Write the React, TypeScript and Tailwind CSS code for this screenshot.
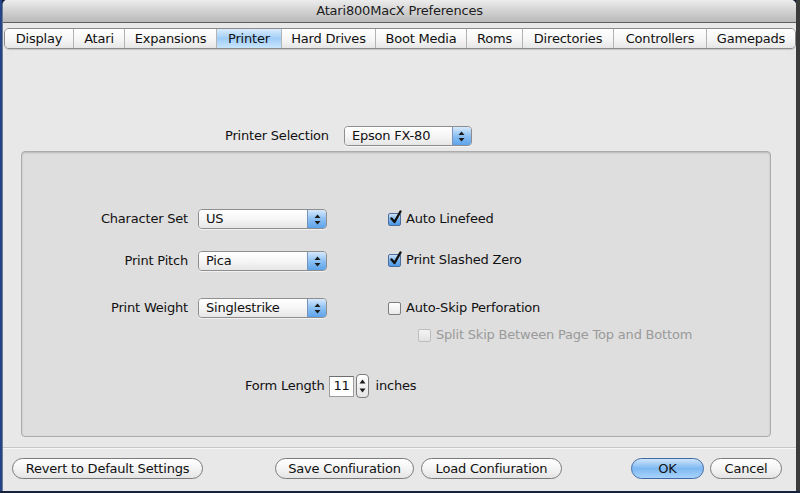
import React from "react";

const tabs = [
  { name: "Display", w: "w-[69px]" },
  { name: "Atari", w: "w-[51px]" },
  { name: "Expansions", w: "w-[92px]" },
  { name: "Printer", w: "w-[65px]", active: true },
  { name: "Hard Drives", w: "w-[94px]" },
  { name: "Boot Media", w: "w-[91px]" },
  { name: "Roms", w: "w-[56px]" },
  { name: "Directories", w: "w-[91px]" },
  { name: "Controllers", w: "w-[93px]" },
  { name: "Gamepads", w: "flex-1" },
];

function Arrows({ className = "" }: { className?: string }) {
  return (
    <svg width="7" height="11" viewBox="0 0 7 11" className={className}>
      <path d="M3.5 0.5 L6.5 4 L0.5 4 Z" fill="#1a1a1a" />
      <path d="M3.5 10.5 L6.5 7 L0.5 7 Z" fill="#1a1a1a" />
    </svg>
  );
}

function Popup({ value, w }: { value: string; w: string }) {
  return (
    <div className={`${w} h-[20px] flex rounded-[4px] border border-[#8e8e8e] overflow-hidden shadow-[0_1px_0_rgba(255,255,255,0.6)]`}>
      <div className="flex-1 flex items-center pl-[7px] bg-gradient-to-b from-white via-[#f6f6f6] to-[#e6e6e6] text-[#111]">
        {value}
      </div>
      <div className="w-[19px] flex items-center justify-center border-l border-[#7a93b8] bg-gradient-to-b from-[#d7e9fb] via-[#8cc0f3] to-[#5da3ea]">
        <Arrows />
      </div>
    </div>
  );
}

function Check({ checked, disabled }: { checked?: boolean; disabled?: boolean }) {
  if (checked) {
    return (
      <div className="w-[13px] h-[13px] rounded-[2px] border border-[#4d6e9c] bg-gradient-to-b from-[#cfe4fa] via-[#78b2ee] to-[#4d98e6] relative">
        <svg width="14" height="15" viewBox="0 0 14 15" className="absolute left-[0px] top-[-4px]">
          <path d="M2.5 8.5 L5.5 12 L11.5 1.5" stroke="#111" strokeWidth="2.4" fill="none" strokeLinecap="round" strokeLinejoin="round" />
        </svg>
      </div>
    );
  }
  return (
    <div
      className={`w-[13px] h-[13px] rounded-[2px] border bg-gradient-to-b ${
        disabled ? "border-[#bdbdbd] from-[#f4f4f4] to-[#e2e2e2]" : "border-[#7d7d7d] from-white to-[#e9e9e9]"
      }`}
    />
  );
}

function Button({ label, w, primary }: { label: string; w: string; primary?: boolean }) {
  return (
    <div
      className={`${w} h-[21px] rounded-full border flex items-center justify-center ${
        primary
          ? "border-[#3f6aa6] bg-gradient-to-b from-[#cfe5fb] via-[#7db8f1] to-[#a8d3fb] text-[#111]"
          : "border-[#7b7b7b] bg-gradient-to-b from-white via-[#f4f4f4] to-[#e4e4e4] text-[#111]"
      }`}
    >
      {label}
    </div>
  );
}

export default function App() {
  return (
    <div className="w-[800px] h-[493px] bg-[#0f1a33] flex flex-col font-['Lucida_Grande','DejaVu_Sans',sans-serif] text-[12px] tracking-[-0.2px] text-[#111]">
      <div className="flex-1 flex">
        <div className="w-[2px] bg-[#244487]" />
        <div className="flex-1 flex flex-col rounded-t-[5px] overflow-hidden bg-[#e8e8e8] border-l border-[#6d7a96]">
          {/* title bar */}
          <div className="h-[23px] shrink-0 flex items-center justify-center text-[13px] text-[#1c1c1c] bg-gradient-to-b from-[#ececec] via-[#d2d2d2] to-[#b9b9b9] border-b border-[#5e5e5e]">
            Atari800MacX Preferences
          </div>

          {/* tabs */}
          <div className="mt-[5px] ml-[1px] mr-0 h-[21px] flex rounded-[5px] border border-[#8b8b8b] overflow-hidden shadow-[0_1px_1px_rgba(0,0,0,0.15)]">
            {tabs.map((t) => (
              <div
                key={t.name}
                className={`${t.w} flex items-center justify-center border-r border-[#b4b4b4] last:border-r-0 text-[13px] ${
                  t.active
                    ? "bg-gradient-to-b from-[#dcecfc] via-[#9fcdf7] to-[#c9e5fd] border-[#7d9cc6]"
                    : "bg-gradient-to-b from-white via-[#f7f7f7] to-[#e6e6e6]"
                }`}
              >
                {t.name}
              </div>
            ))}
          </div>

          {/* printer selection */}
          <div className="mt-[77px] pl-[222px] flex items-center h-[20px]">
            <span className="text-[13px]">Printer Selection</span>
            <div className="ml-[15px] text-[13px]">
              <Popup value="Epson FX-80" w="w-[128px]" />
            </div>
          </div>

          {/* group box */}
          <div className="mt-[5px] ml-[18px] w-[750px] h-[286px] rounded-[4px] border border-[#acacac] bg-[#dedede] shadow-[inset_0_1px_2px_rgba(0,0,0,0.18)] flex flex-col text-[13px]">
            <div className="mt-[57px] h-[20px] flex items-center">
              <span className="w-[166px] text-right">Character Set</span>
              <div className="ml-[10px]">
                <Popup value="US" w="w-[129px]" />
              </div>
              <div className="ml-[61px] flex items-center gap-[5px]">
                <Check checked />
                <span>Auto Linefeed</span>
              </div>
            </div>
            <div className="mt-[22px] h-[20px] flex items-center">
              <span className="w-[166px] text-right">Print Pitch</span>
              <div className="ml-[10px]">
                <Popup value="Pica" w="w-[129px]" />
              </div>
              <div className="ml-[61px] flex items-center gap-[5px] -mt-[2px]">
                <Check checked />
                <span>Print Slashed Zero</span>
              </div>
            </div>
            <div className="mt-[27px] h-[20px] flex items-center">
              <span className="w-[166px] text-right">Print Weight</span>
              <div className="ml-[10px]">
                <Popup value="Singlestrike" w="w-[129px]" />
              </div>
              <div className="ml-[61px] flex items-center gap-[5px]">
                <Check />
                <span>Auto-Skip Perforation</span>
              </div>
            </div>
            <div className="mt-[7px] h-[20px] flex items-center pl-[396px] gap-[5px] text-[#9a9a9a]">
              <Check disabled />
              <span>Split Skip Between Page Top and Bottom</span>
            </div>

            {/* form length */}
            <div className="mt-[29px] h-[24px] flex items-center pl-[223px]">
              <span>Form Length</span>
              <div className="ml-[4px] w-[25px] h-[21px] bg-white border border-[#9c9c9c] border-t-[#6f6f6f] flex items-center justify-end pr-[3px]">
                11
              </div>
              <div className="ml-[2px] w-[13px] h-[24px] rounded-[4px] border border-[#7d7d7d] bg-gradient-to-b from-white to-[#e4e4e4] flex items-center justify-center">
                <svg width="7" height="16" viewBox="0 0 7 16">
                  <path d="M3.5 1.5 L6.5 5.5 L0.5 5.5 Z" fill="#1a1a1a" />
                  <path d="M3.5 14.5 L6.5 10.5 L0.5 10.5 Z" fill="#1a1a1a" />
                </svg>
              </div>
              <span className="ml-[7px]">inches</span>
            </div>
          </div>

          {/* separator */}
          <div className="mt-[10px] h-[2px] border-t border-[#c6c6c6] border-b border-b-[#f7f7f7]" />

          {/* buttons */}
          <div className="mt-[9px] flex items-center text-[13px]">
            <div className="ml-[9px]">
              <Button label="Revert to Default Settings" w="w-[191px]" />
            </div>
            <div className="ml-[72px]">
              <Button label="Save Confiuration" w="w-[139px]" />
            </div>
            <div className="ml-[7px]">
              <Button label="Load Confiuration" w="w-[141px]" />
            </div>
            <div className="ml-[69px]">
              <Button label="OK" w="w-[73px]" primary />
            </div>
            <div className="ml-[6px]">
              <Button label="Cancel" w="w-[72px]" />
            </div>
          </div>
        </div>
        <div className="w-[4px] bg-[#3b3b3b]" />
      </div>
      <div className="h-[2px] bg-[#17223d]" />
    </div>
  );
}
